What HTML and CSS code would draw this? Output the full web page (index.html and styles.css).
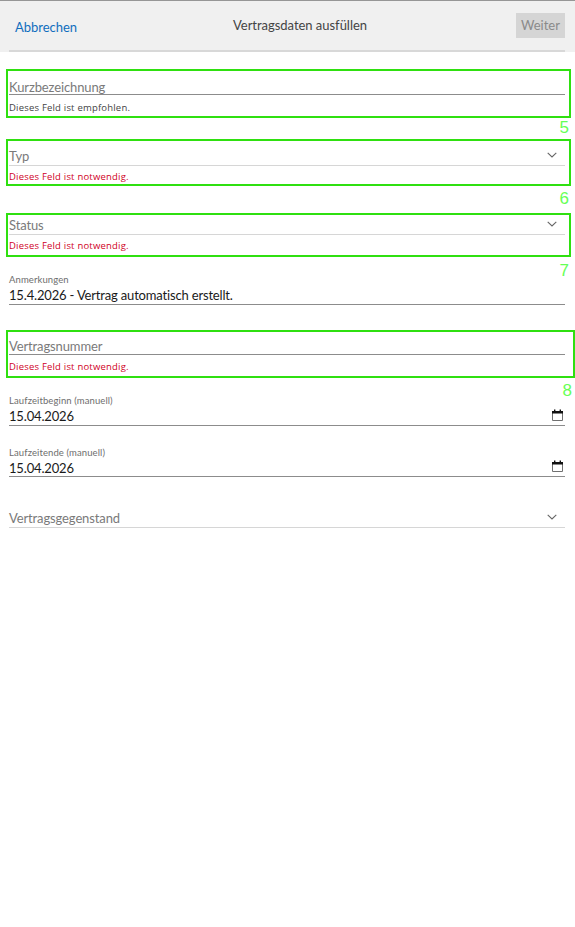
FILE: index.html
```html
<!DOCTYPE html>
<html lang="de">
<head>
<meta charset="utf-8">
<title>Vertragsdaten ausfüllen</title>
<link rel="stylesheet" href="styles.css">
</head>
<body>
<header class="topbar">
  <div class="topbar-inner">
    <a class="cancel">Abbrechen</a>
    <span class="title">Vertragsdaten ausfüllen</span>
    <button class="next" type="button">Weiter</button>
  </div>
</header>
<main class="form">
  <div class="field f-kurz">
    <div class="control input"><span class="placeholder">Kurzbezeichnung</span></div>
    <p class="msg">Dieses Feld ist empfohlen.</p>
  </div>
  <div class="field f-typ">
    <div class="control select"><span class="placeholder">Typ</span>
      <svg class="chev" viewBox="0 0 10 6"><path d="M.7.8 5 5 9.3.8"/></svg></div>
    <p class="msg err">Dieses Feld ist notwendig.</p>
  </div>
  <div class="field f-status">
    <div class="control select"><span class="placeholder">Status</span>
      <svg class="chev" viewBox="0 0 10 6"><path d="M.7.8 5 5 9.3.8"/></svg></div>
    <p class="msg err">Dieses Feld ist notwendig.</p>
  </div>
  <div class="field f-anm">
    <label class="label">Anmerkungen</label>
    <div class="control input filled"><span class="value">15.4.2026 - Vertrag automatisch erstellt.</span></div>
  </div>
  <div class="field f-nr">
    <div class="control input"><span class="placeholder">Vertragsnummer</span></div>
    <p class="msg err">Dieses Feld ist notwendig.</p>
  </div>
  <div class="field f-begin">
    <label class="label">Laufzeitbeginn (manuell)</label>
    <div class="control input filled"><span class="value">15.04.2026</span>
      <svg class="cal" viewBox="0 0 11 12"><path class="cal-body" d="M.5 2.5h10v9H.5z"/><path class="cal-top" d="M0 2h11v2.6H0zM2 .6h1.4V2H2zM7.6.6H9V2H7.6z"/></svg></div>
  </div>
  <div class="field f-ende">
    <label class="label">Laufzeitende (manuell)</label>
    <div class="control input filled"><span class="value">15.04.2026</span>
      <svg class="cal" viewBox="0 0 11 12"><path class="cal-body" d="M.5 2.5h10v9H.5z"/><path class="cal-top" d="M0 2h11v2.6H0zM2 .6h1.4V2H2zM7.6.6H9V2H7.6z"/></svg></div>
  </div>
  <div class="field f-gegen">
    <div class="control select"><span class="placeholder">Vertragsgegenstand</span>
      <svg class="chev" viewBox="0 0 10 6"><path d="M.7.8 5 5 9.3.8"/></svg></div>
  </div>
</main>
<div class="mark m5"><span class="mark-no">5</span></div>
<div class="mark m6"><span class="mark-no">6</span></div>
<div class="mark m7"><span class="mark-no">7</span></div>
<div class="mark m8"><span class="mark-no">8</span></div>
</body>
</html>
```
FILE: styles.css
```css
* { box-sizing: border-box; }
html, body { margin: 0; padding: 0; background: #fff; }
body {
  position: relative;
  height: 927px;
  overflow: hidden;
  font-family: "Lato", "Noto Sans", sans-serif;
  color: #222;
}
.topbar {
  height: 52px;
  padding: 0 10px 0 9px;
  background: #f0f0f0;
  border-top: 1px solid #969696;
}
.topbar-inner {
  height: 51px;
  display: flex;
  align-items: center;
  justify-content: space-between;
  position: relative;
  padding: 0 0 0 6px;
  border-bottom: 2px solid #d8d8d8;
}
.cancel { font-size: 13px; letter-spacing: -.03px; color: #106ebe; margin-top: 2px; }
.title {
  position: absolute;
  left: 224px;
  top: 16px;
  font-size: 13px;
  letter-spacing: -.03px;
  color: #444;
}
.next {
  width: 49px;
  height: 25px;
  margin-top: -1px;
  padding: 0;
  border: 0;
  background: #d5d5d5;
  color: #8a8a8a;
  font: 13px "Lato", sans-serif;
}
.form { padding: 0 10px 0 9px; }
.field { display: block; }
.f-kurz { margin-top: 18px; height: 71px; }
.f-typ { height: 69px; }
.f-status { height: 62px; }
.f-anm { height: 58px; }
.f-nr { height: 63px; }
.f-begin { height: 52px; }
.f-ende { height: 58px; }
.control {
  position: relative;
  height: 25px;
  display: flex;
  align-items: flex-end;
  justify-content: space-between;
  border-bottom: 1px solid #8c8c8c;
}
.control.select { border-bottom-color: #d6d6d6; }
.placeholder {
  font-size: 13px;
  letter-spacing: -.12px;
  line-height: 18px;
  color: #7a7a7a;
}
.value {
  font-size: 13px;
  letter-spacing: -.17px;
  line-height: 18px;
  color: #1a1a1a;
}
.f-kurz .placeholder { margin-bottom: -2px; }
.f-nr .placeholder, .f-ende .value { margin-bottom: -1px; }
.filled { height: 19px; }
.f-ende .filled { height: 18px; }
.label {
  display: block;
  height: 14px;
  font-size: 9.5px;
  letter-spacing: .1px;
  line-height: 15px;
  color: #6e6e6e;
}
.msg {
  margin: 5px 0 0;
  font-family: "Open Sans", "Noto Sans", sans-serif;
  font-size: 9.5px;
  letter-spacing: .2px;
  line-height: 14px;
  color: #444;
}
.f-kurz .msg { margin-top: 6px; }
.f-typ .msg, .f-status .msg { margin-top: 4px; }
.msg.err { color: #d0021f; }
.chev {
  width: 10px;
  height: 6px;
  margin: 0 8px 7px 0;
  fill: none;
  stroke: #666;
  stroke-width: 1.1;
}
.cal {
  width: 11px;
  height: 12px;
  margin: 0 2px 4px 0;
}
.cal-body { fill: none; stroke: #707070; stroke-width: 1; }
.cal-top { fill: #111; }
.mark {
  position: absolute;
  border: 2px solid #2fe010;
}
.mark-no {
  position: absolute;
  right: 0;
  font: 17px/20px "Liberation Sans", sans-serif;
  color: #66ff55;
}
.m5 { left: 6px; top: 69px; width: 565px; height: 49px; }
.m6 { left: 6px; top: 139px; width: 565px; height: 47px; }
.m7 { left: 6px; top: 213px; width: 565px; height: 44px; }
.m8 { left: 6px; top: 330px; width: 569px; height: 48px; }
.m5 .mark-no { top: 47px; }
.m6 .mark-no { top: 48px; }
.m7 .mark-no { top: 46px; }
.m8 .mark-no { top: 49px; right: 1px; }
```
